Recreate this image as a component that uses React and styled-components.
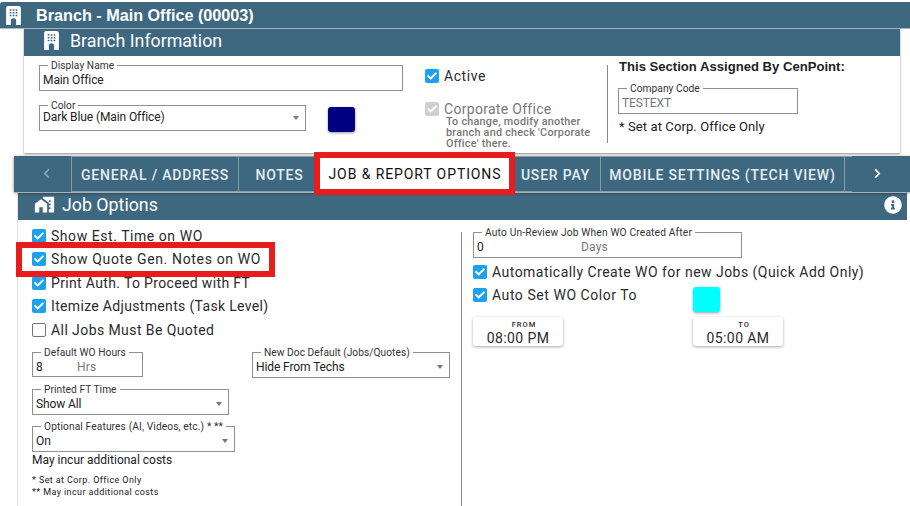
import React from 'react';
import styled, { createGlobalStyle } from 'styled-components';
import { FaCheck, FaChevronLeft, FaChevronRight, FaInfoCircle } from 'react-icons/fa';
import { MdHomeWork } from 'react-icons/md';

const Global = createGlobalStyle`
  html, body { margin: 0; padding: 0; background: #fff; }
  body { font-family: Roboto, 'Liberation Sans', sans-serif; color: #212121; overflow: hidden; }
  *, *::before, *::after { box-sizing: border-box; }
`;

const Page = styled.div`
  width: 910px;
  height: 506px;
  padding-top: 2px;
  overflow: hidden;
`;

const TopBar = styled.div`
  height: 27px;
  background: #3d6880;
  border-bottom: 1px solid #a9b6bd;
  color: #fff;
  display: flex;
  align-items: center;
  padding: 1px 0 0 6px;
  font: 700 16.2px 'Liberation Sans', Arial, sans-serif;
  border-radius: 3px 0 0 0;

  svg { margin-right: 15px; }
`;

const BranchCard = styled.section`
  width: 876px;
  height: 124px;
  margin-left: 24px;
  box-shadow: 0 1px 2px rgba(0, 0, 0, 0.45);
`;

const Header = styled.div`
  height: 27px;
  background: #3d6880;
  color: #fff;
  display: flex;
  align-items: center;
  padding: 0 0 4px ${p => p.$indent}px;
  font-size: 17.8px;
  position: relative;

  > svg { margin-right: ${p => p.$gap}px; }
`;

const InfoButton = styled.span`
  position: absolute;
  right: 5px;
  top: 3px;
  width: 18px;
  height: 18px;
  display: flex;

  svg { font-size: 18px; }
`;

const BranchBody = styled.div`
  display: grid;
  grid-template-columns: 386px 182px 1fr;
  padding: 4px 0 0 15px;
`;

const Column = styled.div`
  display: flex;
  flex-direction: column;
`;

const ColorRow = styled.div`
  display: flex;
  gap: 22px;
  margin-top: 9px;
`;

const Outlined = styled.fieldset`
  margin: 0;
  padding: 0 3px;
  width: ${p => p.$w}px;
  height: ${p => p.$h || 31}px;
  border: 1px solid #8f8f8f;
  font-size: 12px;
  color: #222;
  min-width: 0;

  legend {
    margin-left: 5px;
    padding: 0 3px;
    font-size: 10.2px;
    line-height: 11px;
    letter-spacing: ${p => p.$legendSpacing ?? 0.05}px;
    color: #333;
    white-space: nowrap;
  }
`;

const FieldInner = styled.div`
  height: 18px;
  display: flex;
  align-items: center;
  margin-top: ${p => (p.$raise ? -3 : 0)}px;
`;

const Value = styled.span`
  width: ${p => (p.$unitAt ? `${p.$unitAt}px` : 'auto')};
  letter-spacing: -0.1px;
  white-space: nowrap;
  color: ${p => (p.$muted ? '#777' : '#222')};
`;

const Unit = styled.span`
  font-size: 12px;
  color: #777;
  letter-spacing: 0.2px;
`;

const Caret = styled.i`
  margin: 1px 3px 0 auto;
  border-left: 3.5px solid transparent;
  border-right: 3.5px solid transparent;
  border-top: 4px solid #777;
`;

const Swatch = styled.div`
  width: 27px;
  height: 25px;
  border-radius: 3px;
  background: ${p => p.$color};
  box-shadow: 0 1px 3px rgba(0, 0, 0, 0.4);
  margin-top: ${p => p.$top || 0}px;
`;

const Box = styled.span`
  width: 14px;
  height: 14px;
  flex: none;
  border-radius: 2px;
  display: flex;
  align-items: center;
  justify-content: center;
  background: ${p => (!p.$on ? '#fff' : p.$disabled ? '#cfcfcf' : '#1ba1ee')};
  border: ${p => (p.$on ? 'none' : '1px solid #757575')};
  color: #fff;

  svg { font-size: 10px; }
`;

const CheckRow = styled.div`
  display: flex;
  align-items: center;
  gap: 5px;
  height: ${p => p.$h || 23.5}px;
  font-size: 14px;
  letter-spacing: ${p => p.$spacing ?? 0.55}px;
  color: ${p => (p.$disabled ? '#777' : '#2b2b2b')};
  white-space: nowrap;
`;

const ActiveColumn = styled(Column)`
  gap: 5px;
`;

const Helper = styled.div`
  margin: -9px 0 0 21px;
  font-size: 10.8px;
  line-height: 11px;
  font-weight: 500;
  letter-spacing: 0.25px;
  color: #777;
`;

const AssignedColumn = styled.div`
  height: 78px;
  margin-top: 5px;
  border-left: 1px solid #8a8a8a;
  padding-left: 10px;
`;

const AssignedTitle = styled.div`
  font: 700 13.1px 'Liberation Sans', Arial, sans-serif;
  color: #222;
  margin: -6px 0 9px 1px;
`;

const SetNote = styled.div`
  margin: 5px 0 0 1px;
  font-size: 13px;
  letter-spacing: 0.1px;
`;

const TabBar = styled.nav`
  height: 36px;
  margin: 3px 0 0 14px;
  background: #3d6880;
  display: flex;
  box-shadow: 0 1px 3px rgba(0, 0, 0, 0.5);
  position: relative;
  z-index: 2;
`;

const Arrow = styled.div`
  width: ${p => p.$w}px;
  margin-left: ${p => (p.$end ? 'auto' : 0)};
  display: flex;
  align-items: center;
  justify-content: center;
  color: ${p => (p.$dim ? '#8aa3b1' : '#fff')};
  font-size: 11px;
  flex: none;
  padding: ${p => (p.$end ? '0 8px 2px 0' : '0 0 2px 8px')};
`;

const Tab = styled.div`
  width: ${p => p.$w}px;
  flex: none;
  display: flex;
  align-items: center;
  justify-content: center;
  padding-top: 2px;
  border: 1px solid #8b9ba5;
  border-width: 1px 0 1px 1px;
  font-size: 14px;
  font-weight: 500;
  letter-spacing: 0.8px;
  color: #e6edf1;
  white-space: nowrap;
`;

const ActiveTab = styled(Tab)`
  position: relative;
  margin: 0 -5px 0 -6px;
  padding: 0 0 1px 1px;
  background: #fff;
  border: none;
  font-weight: 400;
  letter-spacing: 0.9px;
  color: #111;
  z-index: 3;

  &::after {
    content: '';
    position: absolute;
    inset: -4px 0 -3px 0;
    border: 6px solid #e81c1c;
  }
`;

const JobCard = styled.section`
  margin: 1px 3px 0 17px;
  height: 320px;
  border-left: 1px solid #e0e0e0;
`;

const JobBody = styled.div`
  display: grid;
  grid-template-columns: 443px 1fr;
  height: 286px;
`;

const LeftPane = styled.div`
  padding: 4px 0 0 14px;
`;

const HighlightRow = styled(CheckRow)`
  position: relative;

  &::after {
    content: '';
    position: absolute;
    top: -6px;
    bottom: -6px;
    left: -16px;
    width: 259px;
    border: 6px solid #e81c1c;
  }
`;

const FieldGrid = styled.div`
  display: grid;
  grid-template-columns: 220px 1fr;
  align-items: start;
  margin-top: 5px;
`;

const Stack = styled.div`
  display: flex;
  flex-direction: column;
  gap: 6px;
  margin-top: 6px;
`;

const Cost = styled.div`
  font-size: 12px;
  letter-spacing: 0;
  margin-top: 1px;
`;

const Notes = styled.div`
  margin-top: 7px;
  font-size: 9px;
  line-height: 12px;
  letter-spacing: 0.4px;
`;

const RightPane = styled.div`
  border-left: 1px solid #8a8a8a;
  margin-top: 12px;
  padding-left: 11px;
`;

const FieldOffset = styled.div`
  margin: -5px 0 2px;
`;

const ColorRowAuto = styled.div`
  display: grid;
  grid-template-columns: 220px 1fr;
  height: 32px;
`;

const TimeRow = styled.div`
  display: grid;
  grid-template-columns: 220px 1fr;
  margin-top: 1px;
`;

const TimeCard = styled.div`
  width: 90px;
  height: 29px;
  border-radius: 3px;
  box-shadow: 0 1px 3px rgba(0, 0, 0, 0.35);
  text-align: center;
  padding-top: 4px;
  color: #2b2b2b;
`;

const TimeLabel = styled.div`
  font-size: 7.5px;
  line-height: 8px;
  letter-spacing: 1px;
  font-weight: 500;
  padding-left: 12px;
`;

const TimeValue = styled.div`
  margin-top: 1px;
  font-size: 14px;
  line-height: 16px;
  letter-spacing: 0.4px;
`;

const BuildingIcon = () => (
  <svg width="15" height="19" viewBox="0 0 14 18" fill="#fff">
    <path
      fillRule="evenodd"
      d="M2 0h10a2 2 0 0 1 2 2v16H9.5v-4a2.5 2.5 0 0 0-5 0v4H0V2a2 2 0 0 1 2-2zM3.4 3v1.4h1.6V3zm2.8 0v1.4h1.6V3zm2.8 0v1.4h1.6V3zM3.4 5.6V7h1.6V5.6zm2.8 0V7h1.6V5.6zm2.8 0V7h1.6V5.6zM3.4 8.2v1.4h1.6V8.2zm2.8 0v1.4h1.6V8.2zm2.8 0v1.4h1.6V8.2z"
    />
  </svg>
);

const Check = ({ on = true, disabled, children, ...rest }) => (
  <CheckRow $disabled={disabled} {...rest}>
    <Box $on={on} $disabled={disabled}>{on && <FaCheck />}</Box>
    {children}
  </CheckRow>
);

const Field = ({ label, value, w, h, select, unit, unitAt, muted, raise, legendSpacing }) => (
  <Outlined $w={w} $h={h} $legendSpacing={legendSpacing}>
    <legend>{label}</legend>
    <FieldInner $raise={raise}>
      <Value $muted={muted} $unitAt={unitAt}>{value}</Value>
      {unit && <Unit>{unit}</Unit>}
      {select && <Caret />}
    </FieldInner>
  </Outlined>
);

const App = () => (
  <Page>
    <Global />
    <TopBar><BuildingIcon />Branch - Main Office (00003)</TopBar>
    <BranchCard>
      <Header $indent={20} $gap={11}><BuildingIcon />Branch Information</Header>
      <BranchBody>
        <Column>
          <Field label="Display Name" value="Main Office" w={364} />
          <ColorRow>
            <Field label="Color" value="Dark Blue (Main Office)" w={267} select raise />
            <Swatch $color="#000080" $top={7} />
          </ColorRow>
        </Column>
        <ActiveColumn>
          <Check $h={32}>Active</Check>
          <Check disabled $spacing={0.3} $h={23}>Corporate Office</Check>
          <Helper>To change, modify another branch and check 'Corporate Office' there.</Helper>
        </ActiveColumn>
        <AssignedColumn>
          <AssignedTitle>This Section Assigned By CenPoint:</AssignedTitle>
          <Field label="Company Code" value="TESTEXT" w={180} muted />
          <SetNote>* Set at Corp. Office Only</SetNote>
        </AssignedColumn>
      </BranchBody>
    </BranchCard>

    <TabBar>
      <Arrow $w={57} $dim><FaChevronLeft /></Arrow>
      <Tab $w={167}>GENERAL / ADDRESS</Tab>
      <Tab $w={82}>NOTES</Tab>
      <ActiveTab $w={201}>JOB &amp; REPORT OPTIONS</ActiveTab>
      <Tab $w={90}>USER PAY</Tab>
      <Tab $w={244}>MOBILE SETTINGS (TECH VIEW)</Tab>
      <Tab $w={8} />
      <Arrow $w={58} $end><FaChevronRight /></Arrow>
    </TabBar>

    <JobCard>
      <Header $indent={16} $gap={7}>
        <MdHomeWork size={21} />Job Options
        <InfoButton><FaInfoCircle /></InfoButton>
      </Header>
      <JobBody>
        <LeftPane>
          <Check>Show Est. Time on WO</Check>
          <HighlightRow $spacing={0.65}>
            <Box $on><FaCheck /></Box>Show Quote Gen. Notes on WO
          </HighlightRow>
          <Check $spacing={0.35}>Print Auth. To Proceed with FT</Check>
          <Check $spacing={0.33}>Itemize Adjustments (Task Level)</Check>
          <Check on={false} $spacing={0.42}>All Jobs Must Be Quoted</Check>
          <FieldGrid>
            <Field label="Default WO Hours" value="8" w={111} h={30} unit="Hrs" unitAt={41} />
            <Field label="New Doc Default (Jobs/Quotes)" value="Hide From Techs" w={198} select />
          </FieldGrid>
          <Stack>
            <Field label="Printed FT Time" value="Show All" w={197} select />
            <Field label="Optional Features (AI, Videos, etc.) * **" value="On" w={203} select legendSpacing={0.12} />
          </Stack>
          <Cost>May incur additional costs</Cost>
          <Notes>
            * Set at Corp. Office Only<br />
            ** May incur additional costs
          </Notes>
        </LeftPane>
        <RightPane>
          <FieldOffset>
            <Field label="Auto Un-Review Job When WO Created After" value="0" w={269} unit="Days" unitAt={104} legendSpacing={0.17} />
          </FieldOffset>
          <Check $spacing={0.47}>Automatically Create WO for new Jobs (Quick Add Only)</Check>
          <ColorRowAuto>
            <Check>Auto Set WO Color To</Check>
            <Swatch $color="#00ffff" $top={3} />
          </ColorRowAuto>
          <TimeRow>
            <TimeCard><TimeLabel>FROM</TimeLabel><TimeValue>08:00 PM</TimeValue></TimeCard>
            <TimeCard><TimeLabel>TO</TimeLabel><TimeValue>05:00 AM</TimeValue></TimeCard>
          </TimeRow>
        </RightPane>
      </JobBody>
    </JobCard>
  </Page>
);

export default App;
